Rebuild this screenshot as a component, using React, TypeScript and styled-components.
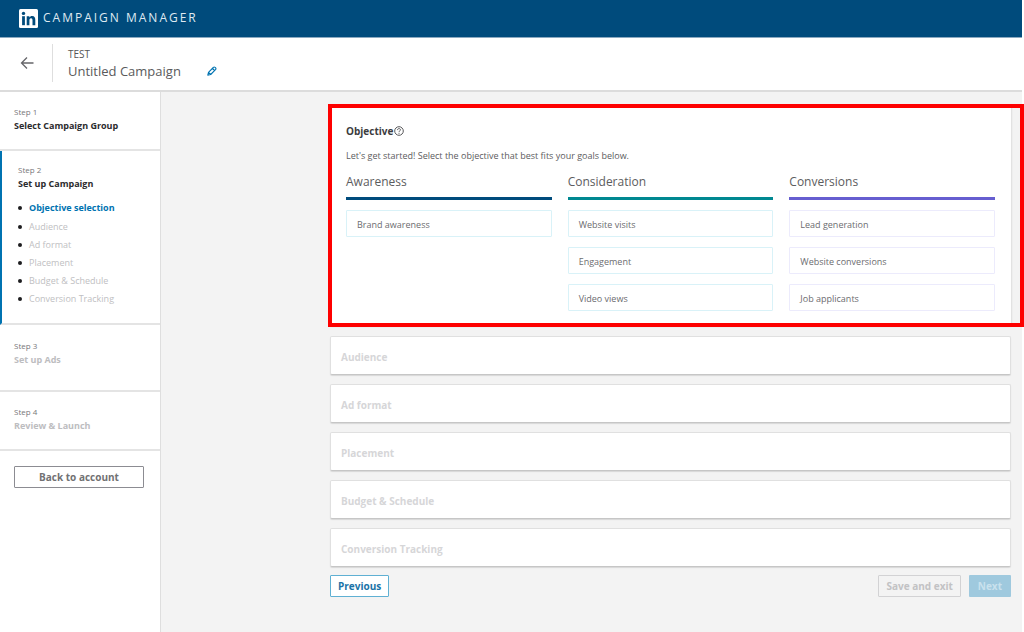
import React from "react";
import styled, { createGlobalStyle } from "styled-components";

const GlobalStyle = createGlobalStyle`
  *, *::before, *::after { box-sizing: border-box; }
  html, body { margin: 0; background: #fff; }
  body, button {
    font-family: "Open Sans", "Noto Sans", "Noto Sans CJK KR", sans-serif;
    font-size: 9px;
    line-height: 14px;
    color: #5c5c5e;
  }
  h1, h2, h3, p, ul { margin: 0; padding: 0; font-size: inherit; font-weight: inherit; }
`;

const Page = styled.div`
  display: flex;
  flex-direction: column;
  min-height: 100vh;
  padding-right: 2px;
`;

const TopBar = styled.header`
  display: flex;
  align-items: center;
  gap: 5px;
  height: 38px;
  padding: 0 19px 1px;
  background: #004b7c;
  border-bottom: 1px solid #8ba9c0;
  color: #dfe9f1;
`;

const ProductName = styled.span`
  font-size: 12px;
  line-height: 16px;
  letter-spacing: 2px;
`;

const CampaignBar = styled.div`
  display: flex;
  align-items: center;
  height: 54px;
  padding-bottom: 2px;
  border-bottom: 2px solid #dcdcdc;
`;

const IconButton = styled.button`
  display: flex;
  padding: 0;
  border: 0;
  background: none;
  cursor: pointer;
`;

const BackCell = styled.div`
  display: flex;
  align-items: center;
  width: 53px;
  height: 38px;
  padding-left: 20px;
  border-right: 1px solid #dedede;
`;

const TitleBlock = styled.div`
  padding-left: 15px;
`;

const AccountName = styled.p`
  && { font-size: 10px; }
  line-height: 16px;
  color: #555;
`;

const TitleRow = styled.div`
  display: flex;
  align-items: center;
  gap: 26px;
`;

const CampaignName = styled.h1`
  && { font-size: 13px; }
  line-height: 18px;
  color: #5a5a5c;
`;

const Body = styled.div`
  display: flex;
  flex: 1;
`;

const Sidebar = styled.nav`
  flex: 0 0 161px;
  border-right: 1px solid #dedede;
  background: #fff;
`;

const Step = styled.section<{ $active?: boolean; $tall?: boolean }>`
  padding: ${(p) => (p.$active ? "12px 0 15px 16px" : p.$tall ? "14px 0 23px 14px" : "13px 0 16px 14px")};
  border-left: ${(p) => (p.$active ? "2px solid #0073b1" : "0")};
  border-bottom: 2px solid #e4e4e4;
`;

const StepNumber = styled.p`
  && { font-size: 8px; }
  line-height: 14px;
  color: #77777a;
`;

const StepTitle = styled.h2<{ $state: "done" | "pending" }>`
  && { font-weight: 700; }
  line-height: 14px;
  color: ${(p) => (p.$state === "done" ? "#2b2b2d" : "#bdbdbf")};
`;

const SubSteps = styled.ul`
  margin-top: 8px;
  list-style: none;
`;

const SubStep = styled.li<{ $current?: boolean }>`
  display: flex;
  align-items: center;
  gap: 7px;
  height: 18px;
  margin-bottom: ${(p) => (p.$current ? "1px" : "0")};
  color: ${(p) => (p.$current ? "#0073b1" : "#c0c0c2")};
  font-weight: ${(p) => (p.$current ? 700 : 400)};
  &::before {
    content: "";
    width: 4px;
    height: 4px;
    border-radius: 50%;
    background: #1d1d1f;
  }
`;

const OutlineButton = styled.button<{ $tone: "neutral" | "primary" | "muted" }>`
  height: 22px;
  padding: 0 7px;
  border: 1px solid ${(p) => ({ neutral: "#8c8c92", primary: "#5fb0d3", muted: "#d2d2d4" })[p.$tone]};
  border-radius: 1px;
  background: ${(p) => (p.$tone === "muted" ? "transparent" : "#fff")};
  color: ${(p) => ({ neutral: "#717173", primary: "#1a73a7", muted: "#c2c2c4" })[p.$tone]};
  font-size: 10px;
  font-weight: 700;
  cursor: pointer;
`;

const SolidButton = styled.button`
  height: 22px;
  padding: 0 9px;
  border: 0;
  border-radius: 1px;
  background: #9fc9de;
  color: #c9e1ed;
  font-size: 10px;
  font-weight: 700;
`;

const SidebarFooter = styled.div`
  display: grid;
  padding: 15px 16px 0 14px;
`;

const Main = styled.main`
  flex: 1;
  min-width: 0;
  padding: 13px 11px 32px 169px;
  background: #f3f3f3;
`;

const Highlighted = styled.div`
  position: relative;
  &::after {
    content: "";
    position: absolute;
    inset: -1px -13px -2px -2px;
    border: 4px solid #fe0000;
    pointer-events: none;
  }
`;

const Card = styled.section`
  padding: 19px 16px 14px;
  background: #fff;
  box-shadow: 0 0 0 1px #e2e2e2, 0 1px 2px #bbb;
`;

const CardTitle = styled.h2`
  display: flex;
  align-items: center;
  gap: 1px;
  && { font-weight: 700; font-size: 10px; }
  line-height: 14px;
  color: #3c3c3e;
`;

const Intro = styled.p`
  margin-top: 11px;
`;

const Columns = styled.div`
  display: grid;
  grid-template-columns: repeat(3, 1fr);
  gap: 16px;
  margin-top: 10px;
`;

const ColumnTitle = styled.h3<{ $color: string }>`
  && { font-size: 12px; }
  line-height: 18px;
  padding-bottom: 6px;
  margin-bottom: 10px;
  border-bottom: 3px solid ${(p) => p.$color};
`;

const OptionList = styled.div`
  display: grid;
  gap: 10px;
`;

const Option = styled.button<{ $border: string }>`
  height: 27px;
  padding: 2px 10px 0;
  border: 1px solid ${(p) => p.$border};
  border-radius: 1px;
  background: #fff;
  color: #6c6c6f;
  text-align: left;
  cursor: pointer;
`;

const Panels = styled.div`
  display: grid;
  gap: 9px;
  margin-top: 11px;
`;

const Panel = styled.section`
  display: flex;
  align-items: center;
  height: 39px;
  padding: 2px 10px 0;
  border: 1px solid #e0e0e0;
  border-bottom-color: #c6c6c6;
  border-radius: 2px;
  background: #fff;
  box-shadow: 0 1px 1px #d8d8d8;
  color: #d6d6d8;
  && h2 { font-size: 10px; font-weight: 700; }
`;

const Actions = styled.div`
  display: flex;
  gap: 8px;
  margin-top: 8px;
`;

const Spacer = styled.div`
  flex: 1;
`;

const LogoIcon = () => (
  <svg width="19" height="19" viewBox="0 0 19 19" aria-hidden="true">
    <rect width="19" height="19" rx="1.5" fill="#fff" />
    <g fill="#004b7c">
      <circle cx="4.5" cy="4.4" r="1.7" />
      <rect x="3.1" y="7.2" width="2.8" height="9" />
      <path d="M7.7 7.2h2.7v1.2c.5-.9 1.5-1.5 2.7-1.5 2.6 0 3.2 1.700 3.200 4v5.300h-2.800v-4.700c0-1.200-.1-2.300-1.500-2.300s-1.600 1.100-1.600 2.300v4.700H7.700z" />
    </g>
  </svg>
);

const BackArrow = () => (
  <svg width="14" height="14" viewBox="0 0 14 14" fill="none" stroke="#66666a" strokeWidth="1.3" aria-hidden="true">
    <path d="M13.500 7H1.500M7 1.500 1.500 7 7 12.500" />
  </svg>
);

const PencilIcon = () => (
  <svg width="10" height="10" viewBox="0 0 10 10" fill="none" stroke="#0073b1" strokeWidth="1.100" strokeLinejoin="round" aria-hidden="true">
    <path d="M.8 9.200l.7-2.900L6.300 1.500c.5-.6 1.200-.6 1.800-.1l.5.5c.5.6.5 1.300-.1 1.800L3.700 8.500zM1.500 6.300 3.700 8.500M5.500 2.500l2 2" />
  </svg>
);

const HelpIcon = () => (
  <svg width="10" height="10" viewBox="0 0 10 10" fill="none" stroke="#58585a" strokeWidth="1" aria-hidden="true">
    <circle cx="5" cy="5" r="4.300" />
    <path d="M3.500 4.100c0-1 .6-1.500 1.500-1.500s1.500.5 1.500 1.300c0 .9-1.500 1-1.500 2M5 6.800v1" />
  </svg>
);

const subSteps = ["Objective selection", "Audience", "Ad format", "Placement", "Budget & Schedule", "Conversion Tracking"];

const objectives = [
  { title: "Awareness", color: "#004b7c", border: "#d9f2f8", options: ["Brand awareness"] },
  { title: "Consideration", color: "#008891", border: "#d9f2f8", options: ["Website visits", "Engagement", "Video views"] },
  { title: "Conversions", color: "#665ed0", border: "#ecebfc", options: ["Lead generation", "Website conversions", "Job applicants"] },
];

export default function App() {
  return (
    <>
      <GlobalStyle />
      <Page>
        <TopBar>
          <LogoIcon />
          <ProductName>CAMPAIGN MANAGER</ProductName>
        </TopBar>
        <CampaignBar>
          <BackCell>
            <IconButton aria-label="Back"><BackArrow /></IconButton>
          </BackCell>
          <TitleBlock>
            <AccountName>TEST</AccountName>
            <TitleRow>
              <CampaignName>Untitled Campaign</CampaignName>
              <IconButton aria-label="Edit name"><PencilIcon /></IconButton>
            </TitleRow>
          </TitleBlock>
        </CampaignBar>
        <Body>
          <Sidebar>
            <Step>
              <StepNumber>Step 1</StepNumber>
              <StepTitle $state="done">Select Campaign Group</StepTitle>
            </Step>
            <Step $active>
              <StepNumber>Step 2</StepNumber>
              <StepTitle $state="done">Set up Campaign</StepTitle>
              <SubSteps>
                {subSteps.map((name, i) => (
                  <SubStep key={name} $current={i === 0}>{name}</SubStep>
                ))}
              </SubSteps>
            </Step>
            <Step $tall>
              <StepNumber>Step 3</StepNumber>
              <StepTitle $state="pending">Set up Ads</StepTitle>
            </Step>
            <Step>
              <StepNumber>Step 4</StepNumber>
              <StepTitle $state="pending">Review &amp; Launch</StepTitle>
            </Step>
            <SidebarFooter>
              <OutlineButton $tone="neutral">Back to account</OutlineButton>
            </SidebarFooter>
          </Sidebar>
          <Main>
            <Highlighted>
              <Card>
                <CardTitle>Objective<HelpIcon /></CardTitle>
                <Intro>Let's get started! Select the objective that best fits your goals below.</Intro>
                <Columns>
                  {objectives.map((group) => (
                    <div key={group.title}>
                      <ColumnTitle $color={group.color}>{group.title}</ColumnTitle>
                      <OptionList>
                        {group.options.map((option) => (
                          <Option key={option} $border={group.border}>{option}</Option>
                        ))}
                      </OptionList>
                    </div>
                  ))}
                </Columns>
              </Card>
            </Highlighted>
            <Panels>
              {subSteps.slice(1).map((name) => (
                <Panel key={name}><h2>{name}</h2></Panel>
              ))}
            </Panels>
            <Actions>
              <OutlineButton $tone="primary">Previous</OutlineButton>
              <Spacer />
              <OutlineButton $tone="muted">Save and exit</OutlineButton>
              <SolidButton>Next</SolidButton>
            </Actions>
          </Main>
        </Body>
      </Page>
    </>
  );
}
